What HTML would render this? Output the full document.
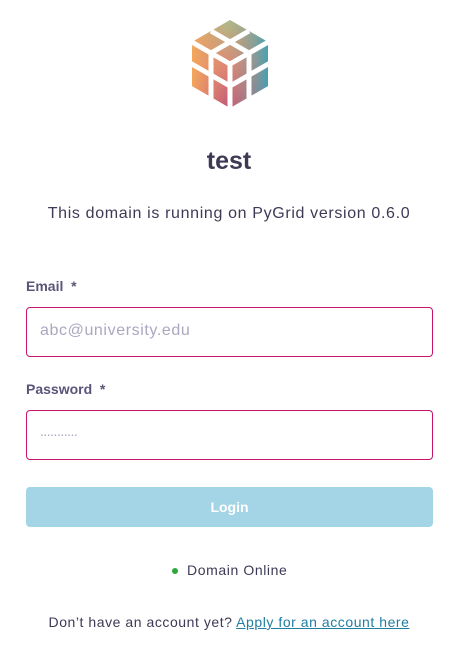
<!DOCTYPE html>
<html><head><meta charset="utf-8"><style>
body{margin:0;width:458px;height:650px;background:#fff;font-family:"Liberation Sans",sans-serif;position:relative;overflow:hidden}
.a{position:absolute}
.lbl{left:26px;font-size:14px;font-weight:bold;color:#5a5478}
.inp{left:26px;width:407px;height:50px;border:1px solid #c8136e;border-radius:4px;box-sizing:border-box}
</style></head><body>
<svg class="a" style="left:190px;top:18px" width="80" height="92" viewBox="190 18 80 92">
<defs>
<linearGradient id="g1" x1="0" y1="0" x2="0" y2="1"><stop offset="0" stop-color="#8fd69a"/><stop offset=".5" stop-color="#d98a7a"/><stop offset="1" stop-color="#b0407f"/></linearGradient>
<linearGradient id="g2" x1="0" y1="0" x2="1" y2="0"><stop offset="0" stop-color="#f5a85a" stop-opacity=".95"/><stop offset=".45" stop-color="#e88a6a" stop-opacity=".35"/><stop offset="1" stop-color="#3fa2b5" stop-opacity=".95"/></linearGradient>
</defs>
<polygon points="230,20 268,42 268,86 230,108 192,86 192,42" fill="url(#g1)"/>
<polygon points="230,20 268,42 268,86 230,108 192,86 192,42" fill="url(#g2)"/>
<g stroke="#fff" stroke-width="5" fill="none">
<line x1="211" y1="31" x2="249" y2="53"/><line x1="249" y1="31" x2="211" y2="53"/>
<line x1="230" y1="64" x2="230" y2="110"/><line x1="190" y1="41" x2="230" y2="64"/><line x1="270" y1="41" x2="230" y2="64"/>
<line x1="211" y1="53" x2="211" y2="99"/><line x1="249" y1="53" x2="249" y2="99"/>
<line x1="190" y1="63" x2="230" y2="86"/><line x1="270" y1="63" x2="230" y2="86"/>
</g>
</svg>
<div class="a" style="left:0;width:458px;top:147px;text-align:center;font-size:25px;font-weight:bold;color:#3d3a55">test</div>
<div class="a" style="left:0;width:458px;top:205px;text-align:center;font-size:16px;color:#3d3a55;letter-spacing:0.65px">This domain is running on PyGrid version 0.6.0</div>
<div class="a lbl" style="top:278px">Email &nbsp;*</div>
<div class="a inp" style="top:307px"></div>
<div class="a" style="left:40px;top:322px;font-size:16px;color:#aba7c0;letter-spacing:0.6px">abc@university.edu</div>
<div class="a lbl" style="top:381px">Password &nbsp;*</div>
<div class="a inp" style="top:410px"></div>
<div class="a" style="left:40px;top:423px;font-size:14px;color:#aba7c0;letter-spacing:-0.5px">...........</div>
<div class="a" style="left:26px;top:487px;width:407px;height:40px;background:#a4d5e6;border-radius:4px;color:#fff;font-weight:bold;font-size:14px;text-align:center;line-height:40px">Login</div>
<div class="a" style="left:172px;top:568px;width:6px;height:6px;border-radius:50%;background:#2ea83a"></div>
<div class="a" style="left:187px;top:562px;font-size:14px;color:#3d3a55;letter-spacing:0.6px">Domain Online</div>
<div class="a" style="left:0;width:458px;top:614px;text-align:center;font-size:14px;color:#3d3a55;letter-spacing:0.55px">Don’t have an account yet? <span style="color:#1f7ea1;text-decoration:underline">Apply for an account here</span></div>
</body></html>
